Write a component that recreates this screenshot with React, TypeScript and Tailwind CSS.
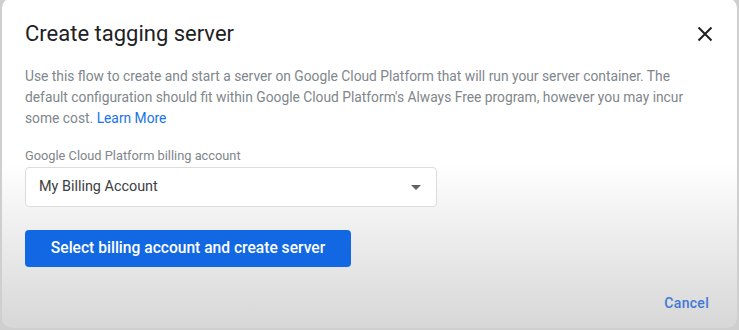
import React from 'react';

const App = () => {
    return (
        <div className="w-[739px] h-[330px] bg-[#cfcfcf] overflow-hidden" style={{ fontFamily: 'Roboto, Arial, sans-serif' }}>
            <div className="mx-[2px] -mt-[2px] h-[330px] rounded-[10px] bg-gradient-to-b from-white from-50% to-[#d7d7d7] flex flex-col">
                {/* header */}
                <div className="flex items-center justify-between pl-[23px] pr-[20px] pt-[22px]">
                    <h1 className="text-[22px] leading-[28px] text-[#202124]">Create tagging server</h1>
                    <button className="w-6 h-6 flex items-center justify-center">
                        <svg width="16" height="16" viewBox="0 0 16 16">
                            <path d="M1.5 1.5 L14.5 14.5 M14.5 1.5 L1.5 14.5" stroke="#202124" strokeWidth="2" />
                        </svg>
                    </button>
                </div>
                <div className="px-[23px] pt-[18px]">
                    <p className="text-[13.8px] leading-[21px] text-[#80868b]">
                        Use this flow to create and start a server on Google Cloud Platform that will run your server container. The default configuration should fit within Google Cloud Platform's Always Free program, however you may incur some cost. <span className="text-[#1a73e8]">Learn More</span>
                    </p>
                    <div className="mt-[19px] text-[12.8px] leading-[16px] text-[#80868b]">Google Cloud Platform billing account</div>
                    <div className="mt-[3px] w-[412px] h-[40px] border border-[#dadce0] rounded-[4px] bg-white flex items-center justify-between pl-[13px] pr-[15px]">
                        <span className="text-[14.4px] text-[#3c4043]">My Billing Account</span>
                        <svg width="10" height="5" viewBox="0 0 10 5">
                            <path d="M0 0 L10 0 L5 5 Z" fill="#5f6368" />
                        </svg>
                    </div>
                    <button className="mt-[23px] w-[326px] h-[37px] rounded-[4px] bg-[#1268e3] text-white text-[15.6px] font-medium">
                        Select billing account and create server
                    </button>
                </div>
                <div className="mt-auto mb-[14px] flex justify-end pr-[28px]">
                    <button className="text-[14px] font-medium text-[#3f78d6] tracking-[0.3px]">Cancel</button>
                </div>
            </div>
        </div>
    );
};

export default App;
